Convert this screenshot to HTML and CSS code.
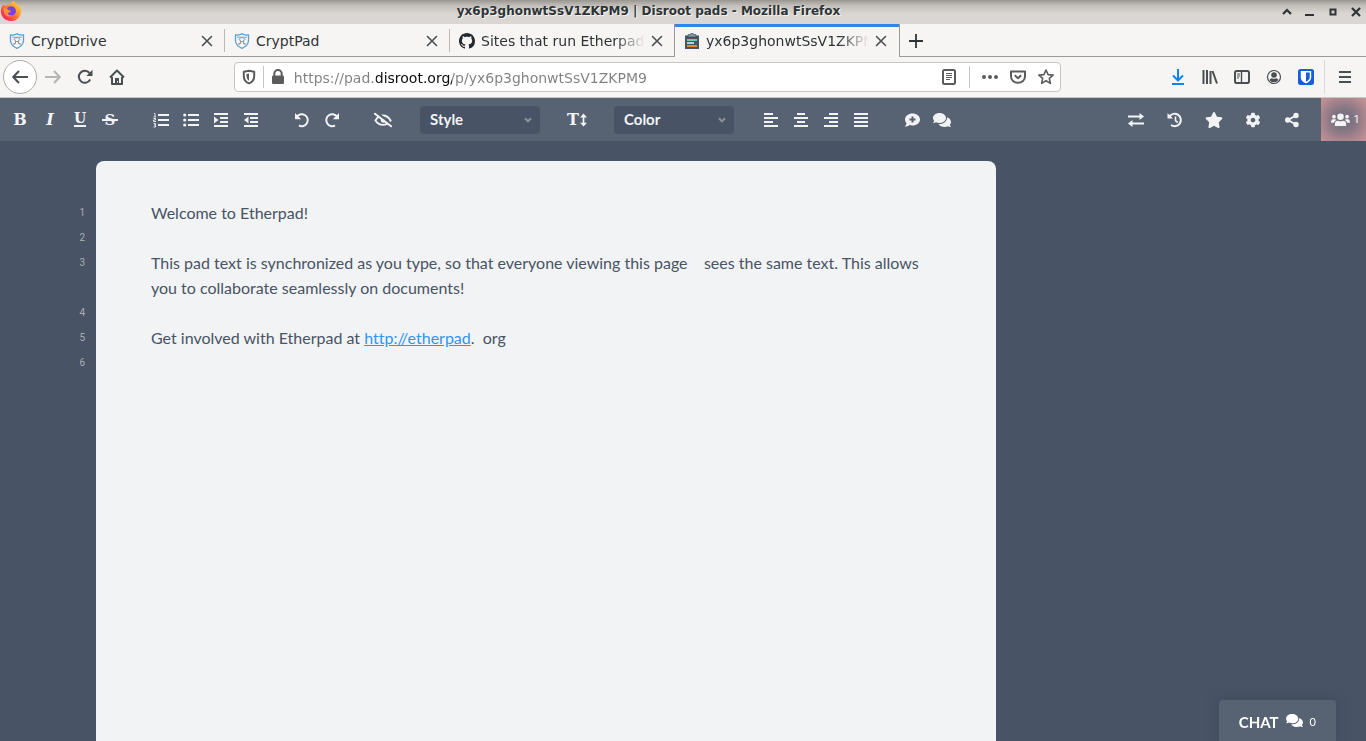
FILE: index.html
```html
<!DOCTYPE html>
<html lang="en">
<head>
<meta charset="utf-8">
<title>yx6p3ghonwtSsV1ZKPM9 | Disroot pads</title>
<link rel="stylesheet" href="styles.css">
</head>
<body>
<svg class="sprite" aria-hidden="true">
  <defs>
    <symbol id="close" viewBox="0 0 12 12"><path d="M1.5 1.5l9 9M10.500 1.500l-9 9" fill="none" stroke="currentColor" stroke-width="1.6" stroke-linecap="round"/></symbol>
    <symbol id="cryptpad" viewBox="0 0 16 16"><path d="M1.500 2Q5 2.300 8 .8Q11 2.300 14.500 2V8Q14 12.800 8 15.300Q2 12.800 1.500 8Z" fill="#f3f7fa" stroke="#5c9fd0" stroke-width="1.300"/><path d="M3 4.200H13M4.500 6.500Q8 2.800 11.500 6.500" fill="none" stroke="#6cabd8" stroke-width="1"/><path d="M5 12V10.500H6.500V8L5.500 6.500M11 12V10.500H9.500V8L10.500 6.500M6.500 8.500H9.500" fill="none" stroke="#999" stroke-width="1.100"/></symbol>
    <symbol id="comments" viewBox="0 0 576 512"><path fill="currentColor" d="M416 192c0-88.400-93.100-160-208-160S0 103.600 0 192c0 34.300 14.100 65.900 38 92-13.400 30.200-35.500 54.200-35.800 54.500-2.200 2.300-2.800 5.700-1.500 8.700S4.800 352 8 352c36.600 0 66.900-12.300 88.700-25 32.200 15.700 70.300 25 111.300 25 114.900 0 208-71.600 208-160zm122 220c23.900-26 38-57.700 38-92 0-66.900-53.500-124.200-129.300-148.100.9 6.600 1.300 13.300 1.300 20.100 0 105.900-107.700 192-240 192-10.800 0-21.300-.8-31.700-1.900C207.800 439.600 281.800 480 368 480c41 0 79.100-9.200 111.300-25 21.800 12.700 52.100 25 88.700 25 3.200 0 6.100-1.900 7.300-4.800 1.300-2.900.7-6.300-1.500-8.700-.3-.3-22.400-24.200-35.800-54.500z"/></symbol>
    <symbol id="chevron" viewBox="0 0 8 6"><path d="M1 1.200L4 4.400 7 1.200" fill="none" stroke="currentColor" stroke-width="2"/></symbol>
  </defs>
</svg>

<header class="titlebar">
  <svg class="firefox" viewBox="0 0 22 22" aria-hidden="true">
    <defs>
      <linearGradient id="flame" x1="1" y1="0" x2="0" y2="1"><stop offset="0" stop-color="#ffe53b"/><stop offset=".4" stop-color="#ff9a2a"/><stop offset=".75" stop-color="#ff3b4b"/><stop offset="1" stop-color="#e5177b"/></linearGradient>
    </defs>
    <path d="M3.500 3.500C4 4.500 5 4.500 6 4.500C8 3 10 3 11.500 3.500C11.500 1.500 12.500 0 14 -1C14.500 2 17 3 18.500 5C19 4.500 19 4 18.800 3.500C21.500 7 21.800 12 19.500 15.500C17 19.500 12 21 8 19.500C3 18 .5 13.500 1 9C1.200 6.500 2 5 3.500 3.500Z" fill="url(#flame)"/>
    <path d="M7 7.500C9 4.500 14 4.500 15.500 8C17 11.500 14.500 14.500 11.500 14.500C9 14.500 7 13 6.800 11C8.500 12 10 11 11 10C9.500 9.800 8 9 7 7.500Z" fill="#7542e5"/>
    <path d="M3.500 7C5 6.500 6.500 7 7.500 8.500C8.500 9.500 10 9.500 11 10C10 11.500 8 11.500 7.500 12C8 14 10 15 12 14.500C9 17 4.500 14.500 4 11Z" fill="#ff922e"/>
  </svg>
  <h1 class="window-title">yx6p3ghonwtSsV1ZKPM9 | Disroot pads - Mozilla Firefox</h1>
  <div class="window-controls">
    <button aria-label="Roll up"><svg viewBox="0 0 10 10"><path d="M1 7l4-4 4 4" fill="none" stroke="currentColor" stroke-width="2.200"/></svg></button>
    <button aria-label="Minimize"><svg viewBox="0 0 10 10"><path d="M0 8h9" stroke="currentColor" stroke-width="2"/></svg></button>
    <button aria-label="Maximize"><svg viewBox="0 0 10 10"><path d="M2.500 2.500h5v5h-5z" fill="none" stroke="currentColor" stroke-width="2"/></svg></button>
    <button aria-label="Close window"><svg viewBox="0 0 10 10"><path d="M1 1l8 8M9 1l-8 8" stroke="currentColor" stroke-width="2.200"/></svg></button>
  </div>
</header>

<nav class="tabs" aria-label="Tabs">
  <div class="tab"><svg class="favicon"><use href="#cryptpad"/></svg><span class="tab-label">CryptDrive</span><button aria-label="Close tab"><svg><use href="#close"/></svg></button></div>
  <div class="tab"><svg class="favicon"><use href="#cryptpad"/></svg><span class="tab-label">CryptPad</span><button aria-label="Close tab"><svg><use href="#close"/></svg></button></div>
  <div class="tab"><svg class="favicon" viewBox="0 0 16 16"><path fill="#24292e" d="M8 0C3.580 0 0 3.580 0 8c0 3.540 2.290 6.530 5.470 7.590.4.070.55-.17.55-.38 0-.19-.01-.82-.01-1.490-2.010.37-2.530-.49-2.690-.94-.09-.23-.48-.94-.82-1.130-.28-.15-.68-.52-.01-.53.63-.01 1.080.58 1.230.82.72 1.210 1.870.87 2.330.66.07-.52.28-.87.51-1.070-1.780-.2-3.640-.89-3.640-3.950 0-.87.31-1.590.82-2.150-.08-.2-.36-1.020.08-2.120 0 0 .67-.21 2.200.82.64-.18 1.320-.27 2-.27s1.360.09 2 .27c1.530-1.040 2.200-.82 2.200-.82.44 1.100.16 1.920.08 2.120.51.56.82 1.270.82 2.150 0 3.070-1.870 3.750-3.650 3.950.29.25.54.73.54 1.480 0 1.070-.01 1.930-.01 2.200 0 .21.15.46.55.38A8.010 8.010 0 0 0 16 8c0-4.420-3.580-8-8-8z"/></svg><span class="tab-label fade">Sites that run Etherpad Lite</span><button aria-label="Close tab"><svg><use href="#close"/></svg></button></div>
  <div class="tab active"><svg class="favicon" viewBox="0 0 16 16"><path d="M1 2.500h14V16H1z" fill="#485365"/><path d="M4 3V1.500h2.500a1.500 1.500 0 0 1 3 0H12V4H4z" fill="#8791a0" stroke="#3d4759" stroke-width=".6"/><path d="M3 7h10" stroke="#64d29b" stroke-width="2"/><path d="M3 10h7" stroke="#f2f3f4" stroke-width="1.500"/><path d="M3 13h10" stroke="#e98b18" stroke-width="2"/></svg><span class="tab-label fade">yx6p3ghonwtSsV1ZKPM9</span><button aria-label="Close tab"><svg><use href="#close"/></svg></button></div>
  <button class="new-tab" aria-label="New tab"><svg viewBox="0 0 14 14"><path d="M7 0v14M0 7h14" stroke="currentColor" stroke-width="1.800"/></svg></button>
</nav>

<div class="navbar">
  <button class="back" aria-label="Back"><svg viewBox="0 0 16 16"><path d="M16 8H1.500M7 2L1.200 8 7 14" class="stroke"/></svg></button>
  <button class="disabled" aria-label="Forward" disabled><svg viewBox="0 0 16 16"><path d="M0 8h14.500M9 2l5.800 6L9 14" class="stroke"/></svg></button>
  <button aria-label="Reload"><svg viewBox="0 0 16 16"><path d="M13.200 10.500A6 6 0 1 1 12.500 4" class="stroke"/><path d="M15.500 .8V7H9.300z" fill="currentColor"/></svg></button>
  <button aria-label="Home"><svg viewBox="0 0 16 16"><path d="M1 8.500L8 1.500l7 7M3 8v7h10V8" class="stroke"/><path d="M6 9h4v6H6z" fill="currentColor"/><path d="M8.500 12v1.500" stroke="#f6f5f3"/></svg></button>
  <span class="spring"></span>
  <div class="urlbar">
    <button aria-label="Tracking protection"><svg viewBox="0 0 16 16"><path d="M8 1.800l5.200 1V7c0 4-2.200 6.300-5.200 7.400C5 13.300 2.800 11 2.800 7V2.800z" class="stroke"/><path d="M8 4.500l-2.500.5V7c0 2.300 1 3.800 2.500 4.700z" fill="currentColor"/></svg></button>
    <span class="rule"></span>
    <button aria-label="Site information"><svg viewBox="0 0 16 16"><path d="M4.300 7V4.700a3.700 3.700 0 0 1 7.400 0V7" class="stroke"/><rect x="2" y="6.500" width="12" height="8.500" rx="1.200" fill="currentColor"/></svg></button>
    <input class="address" type="text" aria-label="Address" value="https://pad.disroot.org/p/yx6p3ghonwtSsV1ZKPM9" spellcheck="false">
    <button class="reader" aria-label="Reader view"><svg viewBox="0 0 16 16"><rect x="2" y="1" width="12" height="14" rx="1.500" class="stroke"/><path d="M5 4.500h6M5 6.500h6M5 8.500h6M5 10.500h4" stroke="currentColor"/></svg></button>
    <span class="rule"></span>
    <button class="more" aria-label="Page actions"><svg viewBox="0 0 16 16"><g fill="currentColor"><circle cx="2" cy="8" r="2"/><circle cx="8" cy="8" r="2"/><circle cx="14" cy="8" r="2"/></g></svg></button>
    <button aria-label="Save to Pocket"><svg viewBox="0 0 16 16"><path d="M1 2.500h14V7.500a7 6.300 0 0 1-14 0z" class="stroke"/><path d="M4.800 6.300L8 9.300l3.200-3" class="stroke"/></svg></button>
    <button aria-label="Bookmark"><svg viewBox="0 0 16 16"><path d="M8 1l2.100 4.600 5 .5-3.800 3.300 1.100 5L8 11.800l-4.400 2.600 1.100-5L.9 6.100l5-.5z" fill="none" stroke="currentColor" stroke-width="1.600" stroke-linejoin="round"/></svg></button>
  </div>
  <span class="spring"></span>
  <button class="download" aria-label="Downloads"><svg viewBox="0 0 16 16"><path d="M8 0v11M3 6.500l5 5 5-5M2 15h12" class="stroke"/></svg></button>
  <button aria-label="Library"><svg viewBox="0 0 16 16"><path d="M1.500 1v14M5 1v14M8.500 2v13M10.500 2l4.500 12.500" class="stroke"/></svg></button>
  <button aria-label="Sidebars"><svg viewBox="0 0 16 16"><rect x="1" y="2" width="14" height="12" rx="1.800" class="stroke"/><path d="M7.500 2v12" stroke="currentColor" stroke-width="1.400"/><path d="M3 5h3M3 7h3M3 9h2" stroke="currentColor"/></svg></button>
  <button aria-label="Account"><svg viewBox="0 0 16 16"><circle cx="8" cy="8" r="6.500" fill="none" stroke="currentColor" stroke-width="1.200"/><circle cx="8" cy="6" r="2.800" fill="currentColor"/><path d="M3.500 11q1-2 2.500-1.800 2 1 4 0 1.500-.2 2.500 1.800a5.500 5.500 0 0 1-9 0z" fill="currentColor"/></svg></button>
  <button aria-label="Bitwarden"><svg viewBox="0 0 16 16"><rect width="16" height="16" rx="2.500" fill="#175ddc"/><path d="M2.800 2h10.400v6.500q0 3.500-5.200 6Q2.800 12 2.800 8.500z" fill="#fff"/><path d="M8 3.500h3.700v5q0 2.300-3.700 4.300z" fill="#175ddc"/></svg></button>
  <span class="rule tall"></span>
  <button class="menu" aria-label="Menu"><svg viewBox="0 0 16 16"><path d="M2 3h12M2 8h12M2 13h12" class="stroke"/></svg></button>
</div>

<div class="toolbar" role="toolbar" aria-label="Formatting">
  <div class="group">
    <button class="letter" aria-label="Bold">B</button>
    <button class="letter italic" aria-label="Italic">I</button>
    <button class="letter" aria-label="Underline"><span class="underline">U</span></button>
    <button class="letter" aria-label="Strikethrough"><span class="strike">S</span></button>
  </div>
  <div class="group">
    <button aria-label="Ordered list"><svg viewBox="0 0 16 16"><path d="M5 3h11M5 8h11M5 13h11" class="bar"/><path d="M1 1.500h1V5M.5 5h2.500M.5 6.500h2V8h-2v1.500H3M.5 11.500h2V15h-2M1 13h1.500" fill="none" stroke="currentColor" stroke-width=".9"/></svg></button>
    <button aria-label="Unordered list"><svg viewBox="0 0 16 16"><path d="M5 3h11M5 8h11M5 13h11" class="bar"/><g fill="currentColor"><circle cx="1.700" cy="3" r="1.600"/><circle cx="1.700" cy="8" r="1.600"/><circle cx="1.700" cy="13" r="1.600"/></g></svg></button>
    <button aria-label="Indent"><svg viewBox="0 0 16 16"><path d="M1 2h14M7 6h8M7 10h8M1 14h14" class="bar"/><path d="M1 4.500L5.500 8 1 11.500z" fill="currentColor"/></svg></button>
    <button aria-label="Outdent"><svg viewBox="0 0 16 16"><path d="M1 2h14M7 6h8M7 10h8M1 14h14" class="bar"/><path d="M5.500 4.500L1 8l4.500 3.500z" fill="currentColor"/></svg></button>
  </div>
  <div class="group">
    <button aria-label="Undo"><svg viewBox="0 0 16 16"><path d="M3 4.500A6 6 0 1 1 5 13.500" class="thick"/><path d="M1 1v6.200h6.200L5 5z" fill="currentColor"/></svg></button>
    <button aria-label="Redo"><svg viewBox="0 0 16 16"><path d="M13 4.500A6 6 0 1 0 11 13.500" class="thick"/><path d="M15 1v6.200H8.800L11 5z" fill="currentColor"/></svg></button>
  </div>
  <div class="group">
    <button aria-label="Clear authorship colors"><svg class="wide" viewBox="0 0 20 16"><path d="M1.500 8.500Q5 3 10 3t8.500 5.500Q15 13.500 10 13.500T1.500 8.500z" class="thick"/><circle cx="10.500" cy="8" r="3" fill="currentColor"/><path d="M2 -1l18 14.500" stroke="#576273" stroke-width="3"/><path d="M1 1l18 14" stroke="currentColor" stroke-width="2.200" stroke-linecap="round"/></svg></button>
  </div>
  <div class="group picker"><select aria-label="Style"><option>Style</option><option>Heading 1</option><option>Code</option></select><svg class="chevron"><use href="#chevron"/></svg></div>
  <div class="group">
    <button class="letter size" aria-label="Font size">T<svg viewBox="0 0 8 16"><path d="M4 3v10" class="bar"/><path d="M0 5l4-4.500L8 5zM0 11l4 4.500L8 11z" fill="currentColor"/></svg></button>
  </div>
  <div class="group picker"><select aria-label="Color"><option>Color</option><option>Black</option><option>Red</option></select><svg class="chevron"><use href="#chevron"/></svg></div>
  <div class="group">
    <button aria-label="Align left"><svg viewBox="0 0 16 16"><path d="M1 2h9M1 6h14M1 10h9M1 14h14" class="bar"/></svg></button>
    <button aria-label="Align center"><svg viewBox="0 0 16 16"><path d="M4 2h8M1 6h14M4 10h8M1 14h14" class="bar"/></svg></button>
    <button aria-label="Align right"><svg viewBox="0 0 16 16"><path d="M6 2h9M1 6h14M6 10h9M1 14h14" class="bar"/></svg></button>
    <button aria-label="Justify"><svg viewBox="0 0 16 16"><path d="M1 2h14M1 6h14M1 10h14M1 14h14" class="bar"/></svg></button>
  </div>
  <div class="group">
    <button aria-label="Add comment"><svg viewBox="0 0 16 16"><path d="M8.500 1.500c4.200 0 7.500 2.600 7.500 6s-3.300 6-7.500 6q-1.500 0-2.800-.4Q3.500 14.800.8 14.800 2.300 13 2.500 11.200 1 9.600 1 7.500c0-3.400 3.300-6 7.500-6z" fill="currentColor"/><path d="M8.500 4.500v6M5.500 7.500h6" stroke="#576273" stroke-width="2"/></svg></button>
    <button aria-label="Show comments"><svg class="wide"><use href="#comments"/></svg></button>
  </div>
  <div class="group end">
    <button aria-label="Import/Export"><svg viewBox="0 0 16 16"><path d="M0 4.500h13M3 11.500h13" class="bar"/><path d="M11.500 1L16 4.500 11.500 8zM4.500 8L0 11.500 4.500 15z" fill="currentColor"/></svg></button>
    <button aria-label="Timeslider"><svg viewBox="0 0 16 16"><path d="M2.500 4.500A6.200 6.200 0 1 1 4 13" class="thick"/><path d="M.5 1v5.500H6z" fill="currentColor"/><path d="M8.500 4.500v4.200l2.300 1.800" fill="none" stroke="currentColor" stroke-width="1.600"/></svg></button>
    <button aria-label="Save revision"><svg class="wide" viewBox="0 0 576 512"><path fill="currentColor" d="M259.300 17.800L194 150.200 47.900 171.500c-26.200 3.800-36.700 36.100-17.700 54.600l105.700 103-25 145.500c-4.500 26.300 23.200 46 46.400 33.700L288 439.600l130.700 68.700c23.200 12.200 50.900-7.400 46.400-33.700l-25-145.500 105.700-103c19-18.500 8.500-50.800-17.700-54.600L382 150.200 316.700 17.800c-11.700-23.600-45.600-23.900-57.400 0z"/></svg></button>
    <button aria-label="Settings"><svg viewBox="-16 -16 544 544"><path fill="currentColor" d="M487.400 315.700l-42.600-24.600c4.300-23.200 4.300-47 0-70.200l42.600-24.600c4.900-2.800 7.100-8.600 5.500-14-11.100-35.600-30-67.800-54.700-94.600-3.800-4.100-10-5.100-14.800-2.300L380.800 110c-17.900-15.400-38.500-27.300-60.800-35.100V25.800c0-5.600-3.900-10.500-9.400-11.700-36.700-8.200-74.300-7.800-109.200 0-5.500 1.200-9.400 6.100-9.400 11.700V75c-22.200 7.900-42.800 19.800-60.800 35.100L88.700 85.500c-4.900-2.800-11-1.900-14.800 2.300-24.700 26.700-43.600 58.900-54.700 94.600-1.700 5.400.6 11.200 5.500 14L67.300 221c-4.300 23.200-4.300 47 0 70.200l-42.600 24.600c-4.900 2.800-7.100 8.600-5.500 14 11.100 35.600 30 67.800 54.700 94.600 3.800 4.100 10 5.100 14.800 2.300l42.600-24.600c17.900 15.400 38.500 27.300 60.800 35.100v49.200c0 5.600 3.900 10.500 9.400 11.700 36.700 8.200 74.300 7.800 109.200 0 5.500-1.200 9.400-6.100 9.400-11.700v-49.200c22.200-7.900 42.800-19.800 60.800-35.100l42.600 24.600c4.900 2.800 11 1.900 14.800-2.300 24.700-26.700 43.600-58.900 54.700-94.600 1.500-5.500-.7-11.300-5.600-14.100zM256 336c-44.100 0-80-35.900-80-80s35.900-80 80-80 80 35.900 80 80-35.900 80-80 80z"/></svg></button>
    <button aria-label="Share"><svg viewBox="0 0 16 16"><path d="M12 3.500L4 8l8 4.500" class="thick"/><g fill="currentColor"><circle cx="12" cy="3.500" r="2.700"/><circle cx="3.700" cy="8" r="2.700"/><circle cx="12" cy="12.500" r="2.700"/></g></svg></button>
  </div>
  <button class="users" aria-label="Users"><svg viewBox="0 0 20 16"><g fill="currentColor"><circle cx="10" cy="5" r="3.500"/><circle cx="3" cy="5" r="2"/><circle cx="17" cy="5" r="2"/><path d="M4 15v-2.500q0-3.300 3.500-3.300 2.500 1.200 5 0 3.500 0 3.500 3.300V15zM0 11.500V10q0-2.200 2-2.200h2.500l1 .7Q3.200 9.600 3 11.500zM20 11.500V10q0-2.200-2-2.200h-2.500l-1 .7q2.300 1.100 2.500 3z"/></g></svg><span>1</span></button>
</div>

<main class="workspace">
  <div class="gutter" aria-hidden="true">
    <div class="num">1</div><div class="num">2</div><div class="num double">3</div><div class="num">4</div><div class="num">5</div><div class="num">6</div>
  </div>
  <div class="pad" contenteditable="true" role="textbox" aria-multiline="true" aria-label="Pad text" spellcheck="false">
    <div class="line">Welcome to Etherpad!</div>
    <div class="line"><br></div>
    <div class="line">This pad text is synchronized as you type, so that everyone viewing this page &nbsp;&nbsp; sees the same text. This allows you to collaborate seamlessly on documents!</div>
    <div class="line"><br></div>
    <div class="line">Get involved with Etherpad at <a href="http://etherpad.org">http://etherpad</a>. &nbsp;org</div>
    <div class="line"><br></div>
  </div>
</main>

<button class="chat"><span class="chat-label">CHAT</span><svg><use href="#comments"/></svg><span class="count">0</span></button>
</body>
</html>
```
FILE: styles.css
```css
* { box-sizing: border-box; }

body {
  margin: 0;
  height: 100vh;
  display: flex;
  flex-direction: column;
  overflow: hidden;
  background: #485365;
  color: #2e3436;
  font: 14px "DejaVu Sans", sans-serif;
}

button {
  display: flex;
  align-items: center;
  justify-content: center;
  flex: none;
  padding: 0;
  border: 0;
  background: none;
  color: inherit;
  font: inherit;
}

svg { display: block; flex: none; }
.sprite { position: absolute; width: 0; height: 0; }
.stroke { fill: none; stroke: currentColor; stroke-width: 2; stroke-linejoin: round; }
.thick { fill: none; stroke: currentColor; stroke-width: 2; }
.bar { fill: none; stroke: currentColor; stroke-width: 2; }

.titlebar {
  display: grid;
  grid-template-columns: 1fr auto 1fr;
  align-items: center;
  flex: none;
  height: 24px;
  padding-right: 5px;
  background: linear-gradient(#999690, #c5c2be 6px, #d9d6d3 14px);
}
.firefox { width: 22px; height: 22px; }
.window-title {
  margin: 0 0 2px;
  padding-right: 64px;
  font-size: 12px;
  text-shadow: 1px 1px #f4f3f1;
}
.window-controls { display: flex; justify-content: flex-end; gap: 13px; }
.window-controls svg { width: 10px; height: 10px; }

.tabs {
  display: flex;
  flex: none;
  height: 33px;
  background: #f6f5f3;
  box-shadow: inset 0 -1px #9c9a97;
}
.tab {
  display: flex;
  align-items: center;
  flex: 0 1 225px;
  min-width: 0;
  gap: 6px;
  padding: 0 12px 0 9px;
  background: linear-gradient(#bbb9b6, #bbb9b6) right center / 1px 23px no-repeat;
}
.tab:nth-child(3) { background: none; }
.tab.active {
  flex-basis: 226px;
  margin-left: -1px;
  border: solid #9c9a97;
  border-width: 0 1px;
  background: linear-gradient(#3584e4, #3584e4) top / 100% 3px no-repeat, #f6f5f3;
}
.favicon { width: 16px; height: 16px; }
.tab-label { flex: 1; overflow: hidden; white-space: nowrap; }
.fade { mask-image: linear-gradient(to left, transparent, #000 30px); }
.tab button { color: #4a5052; }
.tab button svg { width: 12px; height: 12px; }
.new-tab { width: 32px; }
.new-tab svg { width: 14px; height: 14px; }

.navbar {
  display: flex;
  align-items: center;
  flex: none;
  height: 41px;
  padding-left: 3px;
  border-bottom: 1px solid #cbc8c4;
  background: #f6f5f3;
  color: #4a5052;
}
.navbar button { width: 32px; height: 32px; }
.navbar svg { width: 16px; height: 16px; }
.navbar .back {
  width: 34px;
  height: 34px;
  border: 1px solid #b0aeab;
  border-radius: 50%;
  background: #fff;
}
.navbar .disabled { color: #b5b5b2; }
.navbar .download { color: #0a84ff; }
.navbar .menu { width: 41px; }
.spring { flex: 101; }
.urlbar {
  display: flex;
  align-items: center;
  flex: 827;
  height: 30px;
  border: 1px solid #c8c5c0;
  border-radius: 4px;
  background: #fff;
  color: #5b5b5b;
}
.urlbar button { width: 28px; height: 28px; }
.address {
  flex: 1;
  min-width: 0;
  height: 28px;
  padding: 2px 2px 0;
  border: 0;
  outline: 0;
  background: linear-gradient(90deg, #808080 84px, #0c0c0d 84px, #0c0c0d 160px, #808080 160px);
  background-clip: text;
  -webkit-text-fill-color: transparent;
  font: inherit;
}
.rule { width: 1px; height: 22px; background: #c8c5c0; }
.rule.tall { height: 34px; margin-left: 2px; background: #dcdad6; }
.urlbar .reader { width: 40px; }
.urlbar .more { width: 40px; margin-right: -6px; }

.toolbar {
  display: flex;
  align-items: center;
  flex: none;
  height: 43px;
  padding-left: 5px;
  gap: 21px;
  background: #576273;
  color: #f2f3f4;
}
.group { display: flex; align-items: center; }
.group button { width: 30px; height: 30px; }
.toolbar svg { width: 16px; height: 16px; }
.toolbar .wide { width: 18px; height: 16px; }
.letter { font: bold 16px/16px "DejaVu Serif", serif; }
.italic { font-style: italic; }
.underline {
  border-bottom: 2px solid;
  font-size: 14px;
  line-height: 13px;
}
.strike {
  padding: 0 3px;
  background: linear-gradient(#f2f3f4, #f2f3f4) center / 100% 2px no-repeat;
  font-size: 15px;
}
.toolbar .size { gap: 1px; }
.toolbar .size svg { width: 7px; height: 14px; }
.picker { position: relative; width: 120px; margin: 0 1px; }
.picker select {
  width: 100%;
  height: 28px;
  padding: 0 10px 2px;
  appearance: none;
  border: 0;
  border-radius: 4px;
  background: #485365;
  color: inherit;
  font: bold 15px Lato, sans-serif;
}
.toolbar .chevron {
  position: absolute;
  right: 8px;
  width: 8px;
  height: 6px;
  color: #8d929a;
  pointer-events: none;
}
.end { margin-left: auto; margin-right: -11px; }
.end button { width: 39px; }
.users {
  width: 45px;
  height: 43px;
  padding-left: 4px;
  gap: 3px;
  background: #6f6c7d;
  box-shadow: inset 0 0 20px 2px #dc9c9d;
  font: 11px Roboto, sans-serif;
}
.toolbar .users svg { width: 19px; height: 15px; }

.workspace {
  display: flex;
  flex: 1;
  min-height: 0;
  padding-top: 20px;
}
.gutter {
  flex: none;
  width: 96px;
  padding: 39px 11px 0 0;
  color: #a9afb7;
  font: 10px/25px Roboto, sans-serif;
  text-align: right;
}
.num { height: 25px; }
.num.double { height: 50px; }
.pad {
  flex: 0 1 900px;
  padding: 39px 55px;
  border-radius: 8px 8px 0 0;
  outline: 0;
  background: #f2f3f4;
  color: #485365;
  font: 16px/25px Lato, sans-serif;
  font-variant-ligatures: none;
}
.pad a { color: #2e96f3; }

.chat {
  position: fixed;
  right: 30px;
  bottom: 0;
  height: 41px;
  padding: 2px 20px 0;
  gap: 7px;
  border-radius: 4px 4px 0 0;
  background: #576273;
  box-shadow: 0 0 12px #3f4a5b;
  color: #fff;
  font: 11px Lato, sans-serif;
}
.chat svg { width: 17px; height: 15px; margin-bottom: 3px; }
.chat-label { font-size: 15px; font-weight: bold; }
```
